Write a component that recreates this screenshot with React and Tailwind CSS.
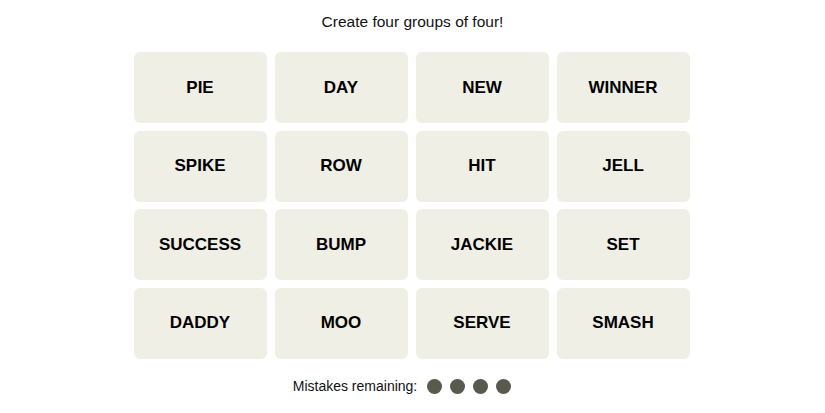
import React from 'react';

const words = [
  'PIE', 'DAY', 'NEW', 'WINNER',
  'SPIKE', 'ROW', 'HIT', 'JELL',
  'SUCCESS', 'BUMP', 'JACKIE', 'SET',
  'DADDY', 'MOO', 'SERVE', 'SMASH',
];

const App = () => {
  return (
    <div className="w-[825px] h-[413px] bg-white flex flex-col items-center" style={{ fontFamily: '"Liberation Sans", Arial, sans-serif' }}>
      <p className="mt-[12px] h-[20px] leading-[20px] text-[15.5px] text-[#121212]">Create four groups of four!</p>
      <div className="mt-[20px] w-[556px] -translate-x-[1px] grid grid-cols-4 gap-x-[8px] gap-y-[7.5px]">
        {words.map((w) => (
          <button
            key={w}
            className="h-[71px] rounded-[6px] bg-[#efefe6] flex items-center justify-center text-[17px] font-bold text-black uppercase"
          >
            {w}
          </button>
        ))}
      </div>
      <div className="mt-[17px] mr-[21px] flex items-center gap-[8px]">
        <span className="text-[14px] text-[#121212] mr-[2px]">Mistakes remaining:</span>
        {[0, 1, 2, 3].map((i) => (
          <span key={i} className="w-[15px] h-[15px] rounded-full bg-[#5a594e]" />
        ))}
      </div>
    </div>
  );
};

export default App;
